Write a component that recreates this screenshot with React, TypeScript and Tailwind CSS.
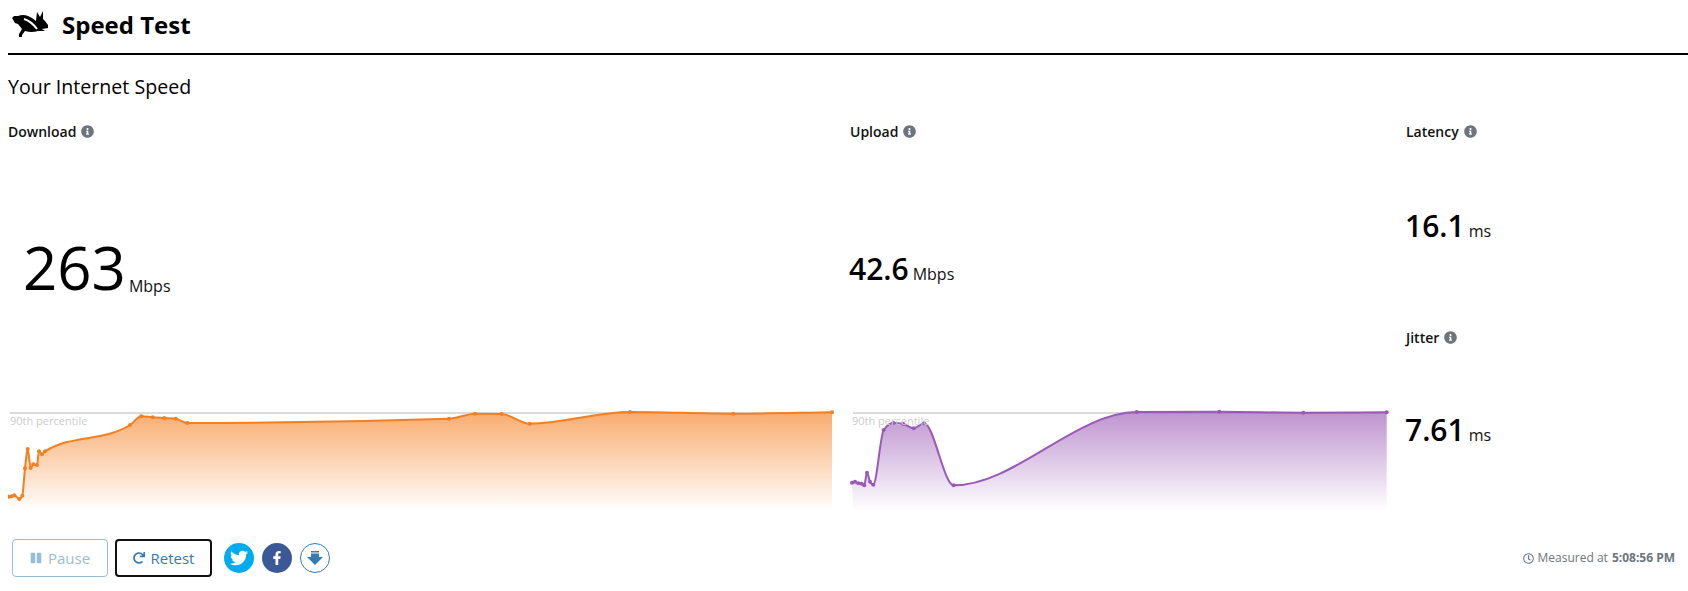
import { FaFacebookF, FaInfoCircle, FaPause, FaRedo, FaRegClock, FaTwitter } from "react-icons/fa";

type Pt = [number, number];

const downloadPts: Pt[] = [
    [9, 496.7], [11.7, 496.3], [14.3, 495.3], [19.3, 499], [22.3, 495.7], [25, 468.3], [27.7, 449],
    [30.7, 468], [33.3, 464.3], [37, 465], [39, 451.3], [42, 454.3], [45, 451.3], [130, 425],
    [141.3, 416.3], [152.7, 417.3], [164.3, 418], [175.7, 418.7], [187.3, 423], [449, 418.7],
    [475, 413.7], [501.7, 414], [529.7, 423.7], [630, 412], [733.3, 413.7], [832, 412.3],
];

const uploadPts: Pt[] = [
    [852, 482.7], [855, 481.7], [858.3, 483.3], [861.7, 483.7], [864.3, 485.3], [867, 472.7],
    [870, 481.7], [873.3, 484.7], [883.7, 430], [893.3, 423], [903.3, 424], [913.7, 428.3],
    [924, 423.3], [953.7, 485.3], [1136.7, 412], [1219.3, 411.7], [1303.3, 412.7], [1386.7, 412.3],
];

// monotone cubic so the line doesn't overshoot between samples
function linePath(pts: Pt[]) {
    const n = pts.length;
    const widths: number[] = [];
    const slopes: number[] = [];
    for (let i = 0; i < n - 1; i++) {
        widths.push(pts[i + 1][0] - pts[i][0]);
        slopes.push((pts[i + 1][1] - pts[i][1]) / widths[i]);
    }
    const tangents = pts.map((_, i) => {
        if (i === 0) return slopes[0];
        if (i === n - 1) return slopes[n - 2];
        const a = slopes[i - 1];
        const b = slopes[i];
        if (a * b <= 0) return 0;
        const p = (a * widths[i] + b * widths[i - 1]) / (widths[i - 1] + widths[i]);
        return Math.sign(a) * Math.min(Math.abs(a), Math.abs(b), 0.5 * Math.abs(p)) * 2;
    });
    let d = `M${pts[0][0]} ${pts[0][1]}`;
    for (let i = 0; i < n - 1; i++) {
        const h = widths[i] / 3;
        d += `C${pts[i][0] + h} ${pts[i][1] + tangents[i] * h} ${pts[i + 1][0] - h} ${pts[i + 1][1] - tangents[i + 1] * h} ${pts[i + 1][0]} ${pts[i + 1][1]}`;
    }
    return d;
}

function Chart({ id, pts, color, x, width }: { id: string; pts: Pt[]; color: string; x: number; width: number }) {
    const line = linePath(pts);
    const first = pts[0][0] + 1;
    const last = pts[pts.length - 1][0];
    return (
        <div className="relative h-[110px] mb-[4px]">
            <svg className="block" width={width} height={110} viewBox={`${x} 405 ${width} 110`}>
                <defs>
                    <linearGradient id={id} x1="0" y1="0" x2="0" y2="1">
                        <stop offset="0" stopColor={color} stopOpacity="0.65" />
                        <stop offset="1" stopColor={color} stopOpacity="0" />
                    </linearGradient>
                </defs>
                <line x1={first} x2={last} y1={413} y2={413} stroke="#cfcfcf" strokeWidth="1.5" />
                <path d={`${line}L${last} 511L${first} 511Z`} fill={`url(#${id})`} />
                <path d={line} fill="none" stroke={color} strokeWidth="2" />
                {pts.map((p) => (
                    <circle key={p[0]} cx={p[0]} cy={p[1]} r="2" fill={color} />
                ))}
            </svg>
            <span className="absolute left-[2px] top-[9px] text-[11px] leading-[14px] text-[#cccccc]">90th percentile</span>
        </div>
    );
}

function Label({ text }: { text: string }) {
    return (
        <div className="flex items-center h-5 text-[14px] font-semibold text-[#111]">
            {text}
            <FaInfoCircle className="ml-[5px] text-[#6c757d]" size={13} />
        </div>
    );
}

function Stat({ value, unit, numClass, unitClass }: { value: string; unit: string; numClass: string; unitClass: string }) {
    return (
        <div className="flex-1 flex items-center">
            <span className={`text-[30px] font-semibold leading-none text-black ml-[-1px] ${numClass}`}>{value}</span>
            <span className={`ml-[4px] text-[16px] text-[#111] ${unitClass}`}>{unit}</span>
        </div>
    );
}

export default function App() {
    return (
        <div className="min-h-screen bg-white pl-2 text-black" style={{ fontFamily: '"Open Sans", sans-serif' }}>
            <header className="flex items-center h-[55px] border-b-2 border-black">
                <svg className="ml-1 mb-[6px]" width="37" height="28" viewBox="0 0 37 28">
                    <path
                        fill="#000"
                        d="M0 8L2 6L6 6Q11 4 16 6Q21 8 24 11L25 2L28 7L31 1L31 9L33 11L36 15L36 18L30 19L33 21L26 21Q20 23 13 21L10 25L10 27L7 27L7 24L10 19L6 14L3 13Z"
                    />
                    <path fill="none" stroke="#fff" strokeWidth="2" d="M12 9Q19 11 25 19" />
                </svg>
                <h1 className="ml-[13px] mb-[3px] text-[24px] font-bold leading-none">Speed Test</h1>
            </header>

            <h2 className="mt-[20px] text-[19.6px] leading-6 h-[46px]">Your Internet Speed</h2>

            <div className="grid grid-cols-[842px_556px_1fr] h-[398px]">
                <div className="flex flex-col">
                    <Label text="Download" />
                    <div className="flex-1 flex items-center pl-[15px]">
                        <span className="mb-[12px] text-[60px] leading-none">263</span>
                        <span className="ml-[3px] mt-[25px] text-[16px] text-[#111]">Mbps</span>
                    </div>
                    <Chart id="dl" pts={downloadPts} color="#f57f20" x={8} width={834} />
                </div>
                <div className="flex flex-col">
                    <Label text="Upload" />
                    <Stat value="42.6" unit="Mbps" numClass="mb-[8px]" unitClass="mt-[1px]" />
                    <Chart id="ul" pts={uploadPts} color="#9b59b6" x={850} width={546} />
                </div>
                <div className="flex flex-col gap-[14px]">
                    <div className="flex-1 flex flex-col">
                        <Label text="Latency" />
                        <Stat value="16.1" unit="ms" numClass="mb-[2px]" unitClass="mt-[8px]" />
                    </div>
                    <div className="flex-1 flex flex-col">
                        <Label text="Jitter" />
                        <Stat value="7.61" unit="ms" numClass="mb-[6px]" unitClass="mt-[3px]" />
                    </div>
                </div>
            </div>

            <footer className="flex items-center mt-5 pl-1 pr-[13px]">
                <button className="flex items-center justify-center w-[96px] h-[38px] rounded border border-[#337ab7] text-[15px] text-[#337ab7] opacity-50">
                    <FaPause size={12} className="mr-[6px]" />
                    Pause
                </button>
                <button className="flex items-center justify-center ml-[7px] w-[97px] h-[38px] rounded border-2 border-[#111] text-[15px] text-[#337ab7]">
                    <FaRedo size={12} className="mr-[6px]" />
                    Retest
                </button>
                <span className="flex items-center justify-center ml-3 w-[30px] h-[30px] rounded-full bg-[#00aced] text-white">
                    <FaTwitter size={18} />
                </span>
                <span className="flex items-center justify-center ml-2 w-[30px] h-[30px] rounded-full bg-[#3b5998] text-white">
                    <FaFacebookF size={14} />
                </span>
                <span className="flex items-center justify-center ml-2 w-[30px] h-[30px] rounded-full border border-[#337ab7]">
                    <svg width="16" height="14" viewBox="0 0 16 14">
                        <path fill="#337ab7" d="M4 0h8v1.500H4zM4 2.500h8V6h4l-8 8-8-8h4z" />
                    </svg>
                </span>
                <div className="ml-auto flex items-center text-[12px] text-[#6c757d]">
                    <FaRegClock size={11} className="mr-[4px]" />
                    <span>Measured at</span>
                    <span className="ml-1 font-bold">5:08:56 PM</span>
                </div>
            </footer>
        </div>
    );
}
